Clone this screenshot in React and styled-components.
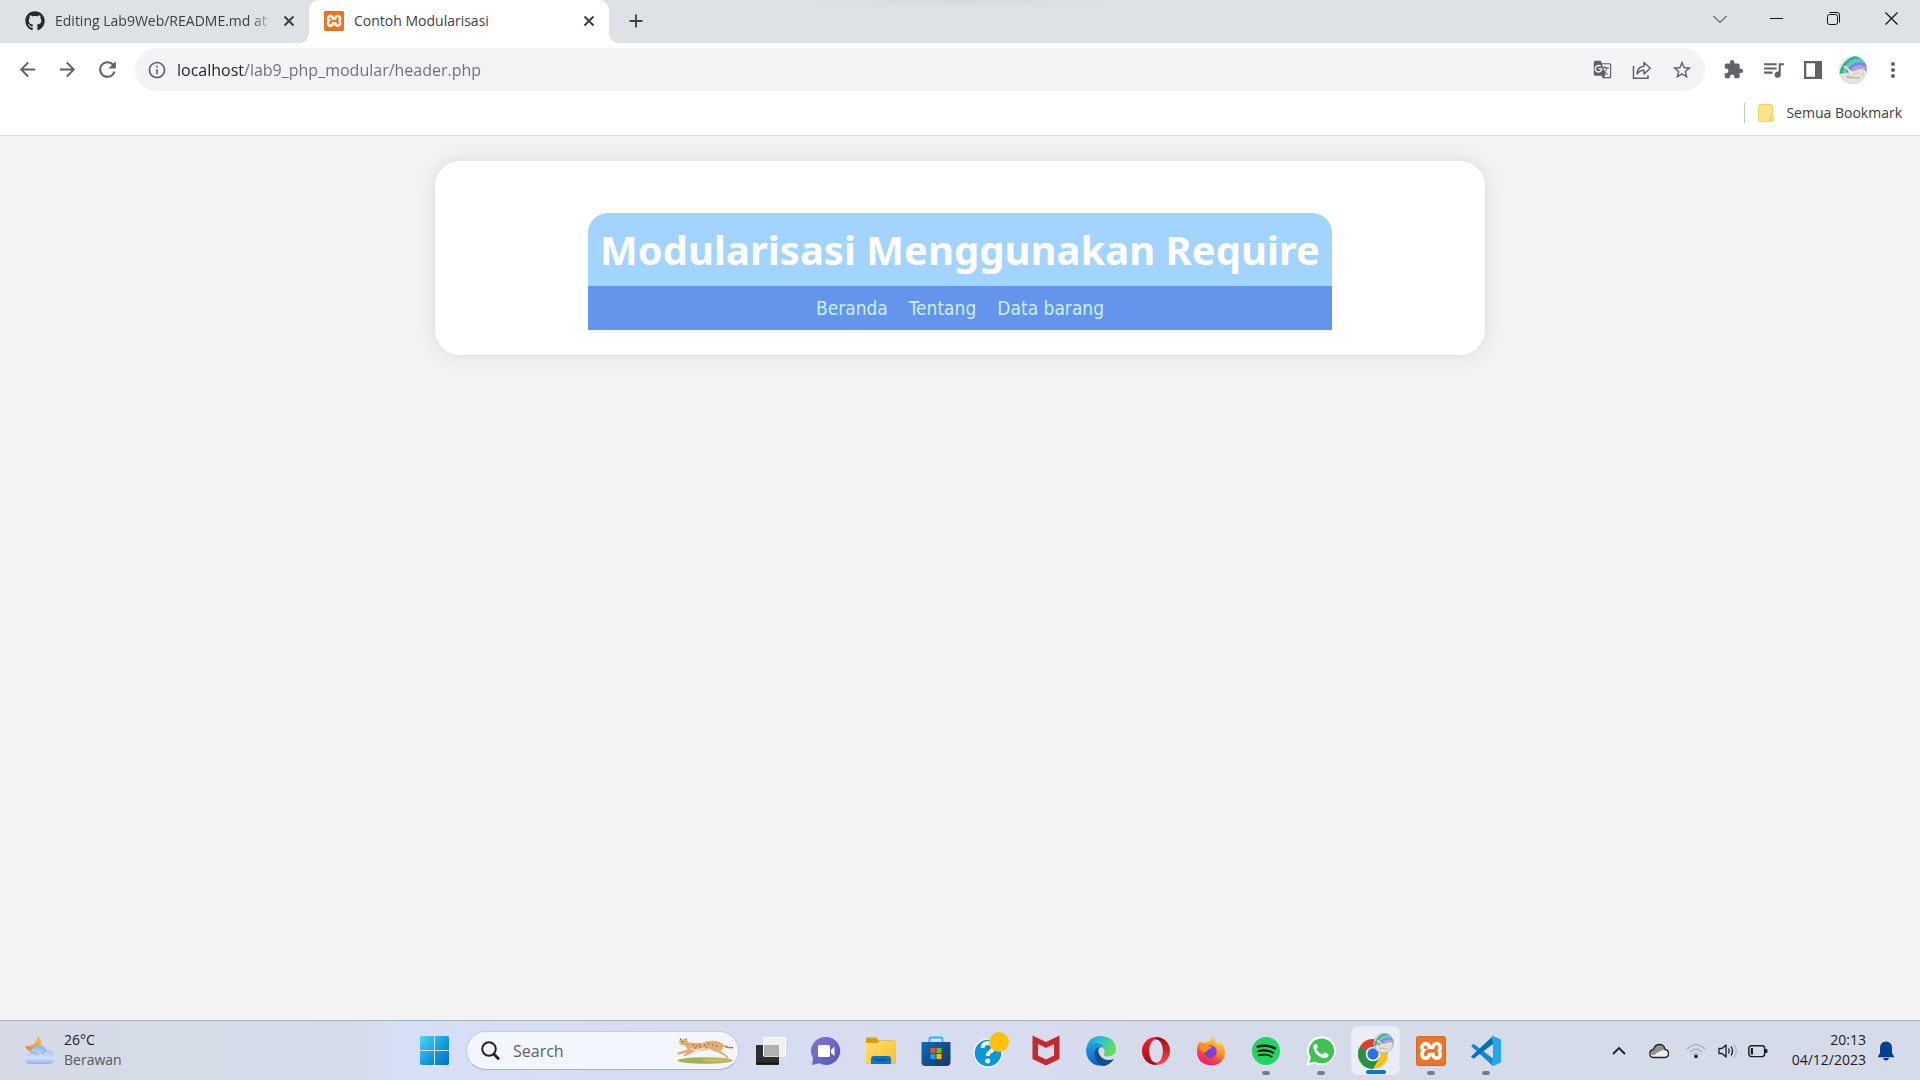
import React from "react";
import styled, { createGlobalStyle, css } from "styled-components";
import {
  MdAdd,
  MdArrowBack,
  MdArrowForward,
  MdExtension,
  MdGTranslate,
  MdInfoOutline,
  MdMoreVert,
  MdQueueMusic,
  MdRefresh,
  MdStarBorder,
} from "react-icons/md";
import { FaGithub } from "react-icons/fa";
import { SiXampp, SiSpotify } from "react-icons/si";

const ui = '"Segoe UI", "Open Sans", "Noto Sans", sans-serif';

const GlobalStyle = createGlobalStyle`
  * { box-sizing: border-box; }
  body { margin: 0; font-family: ${ui}; }
  button, input { font: inherit; }
  svg { display: block; flex: none; }
`;

const Screen = styled.div`
  display: flex;
  flex-direction: column;
  height: 100vh;
  overflow: hidden;
`;

const IconButton = styled.button`
  display: flex;
  align-items: center;
  justify-content: center;
  flex: none;
  width: ${(p) => p.$width || 40}px;
  height: ${(p) => p.$height || 40}px;
  padding: 0;
  border: 0;
  background: none;
  color: ${(p) => p.$color || "#5f6368"};
`;

/* Tab strip */

const TabStrip = styled.header`
  display: flex;
  align-items: stretch;
  height: 43px;
  background: radial-gradient(ellipse 180px 8px at 50% 0, #d6d9de, #dee1e6);
`;

const Tab = styled.div`
  position: relative;
  display: flex;
  align-items: center;
  width: ${(p) => (p.$active ? 300 : 309)}px;
  padding: 0 5px 2px ${(p) => (p.$active ? 15 : 25)}px;
  color: #3c4043;
  font-size: 14px;
  ${(p) =>
    p.$active &&
    css`
      background: #fff;
      border-radius: 10px 10px 0 0;
      &::before,
      &::after {
        content: "";
        position: absolute;
        bottom: 0;
        width: 10px;
        height: 10px;
      }
      &::before {
        left: -10px;
        background: radial-gradient(circle at 0 0, transparent 10px, #fff 10px);
      }
      &::after {
        right: -10px;
        background: radial-gradient(circle at 100% 0, transparent 10px, #fff 10px);
      }
    `}
`;

const TabTitle = styled.span`
  flex: 1;
  min-width: 0;
  margin-left: 10px;
  white-space: nowrap;
  line-height: 20px;
  ${(p) => p.$fade && "mask-image: linear-gradient(to right, #000 194px, transparent 220px);"}
`;

const TabClose = styled(IconButton).attrs({ $width: 30, $height: 30, $color: "#3c4043" })``;

const WindowControls = styled.div`
  display: flex;
  margin-left: auto;
`;

/* Toolbar */

const Toolbar = styled.div`
  display: flex;
  align-items: center;
  height: 52px;
  padding: 1px 7px 0 7px;
  background: #fff;
`;

const AddressBar = styled.div`
  display: flex;
  align-items: center;
  flex: 1;
  height: 43px;
  margin: 0 8px;
  padding: 0 3px 0 12px;
  border-radius: 22px;
  background: #f1f3f4;
  color: #5f6368;
`;

const AddressInput = styled.input`
  flex: 1;
  min-width: 0;
  height: 30px;
  margin-left: 10px;
  padding: 0;
  border: 0;
  outline: 0;
  font-size: 16px;
  color: #5f6368;
  -webkit-text-fill-color: transparent;
  background: linear-gradient(to right, #202124 67px, #6a6e73 67px);
  -webkit-background-clip: text;
  background-clip: text;
`;

const Bookmarks = styled.nav`
  display: flex;
  align-items: center;
  justify-content: flex-end;
  height: 41px;
  padding: 0 18px 4px 0;
  border-bottom: 1px solid #dadce0;
  background: #fff;
`;

const BookmarkButton = styled.button`
  display: flex;
  align-items: center;
  gap: 12px;
  height: 20px;
  padding: 0 0 0 13px;
  border: 0;
  border-left: 1px solid #c6c9cd;
  background: none;
  color: #3c4043;
  font-size: 14px;
  line-height: 20px;
`;

/* Page */

const Viewport = styled.main`
  flex: 1;
  min-height: 0;
  overflow: auto;
  padding: 25px;
  background: #f3f3f3;
`;

const Card = styled.section`
  display: flex;
  justify-content: center;
  max-width: 1050px;
  margin: 0 auto;
  padding: 52px 25px 25px;
  border-radius: 25px;
  background: #fff;
  box-shadow: 0 0 20px rgba(0, 0, 0, 0.1);
`;

const SiteHeader = styled.div`
  min-width: 744px;
`;

const SiteTitle = styled.h1`
  margin: 0;
  padding: 13px 11px;
  border-radius: 20px 20px 0 0;
  background: #a3d3ff;
  color: #fff;
  font-family: Tahoma, "Noto Sans", sans-serif;
  font-size: 40px;
  line-height: 47px;
  text-align: center;
  white-space: nowrap;
`;

const SiteNav = styled.nav`
  display: flex;
  justify-content: center;
  gap: 21px;
  padding: 10px;
  background: #6495ed;
`;

const SiteLink = styled.a`
  color: #c9efe3;
  font-family: Tahoma, "DejaVu Sans Condensed", "DejaVu Sans", sans-serif;
  font-size: 19px;
  line-height: 24px;
  text-decoration: none;
`;

/* Taskbar */

const Taskbar = styled.footer`
  display: flex;
  align-items: center;
  height: 60px;
  border-top: 1px solid #abafbd;
  background: linear-gradient(
    to right,
    #d5dae6 0,
    #d5dbe8 18%,
    #d6dff6 21%,
    #d8dcf2 34%,
    #d8dcf0 50%,
    #d6dbeb 62%,
    #d5dbe9 70%,
    #d5dbe8 100%
  );
`;

const Weather = styled.button`
  display: flex;
  align-items: center;
  flex: 1 0 25px;
  gap: 9px;
  padding: 0 0 2px 25px;
  border: 0;
  background: none;
  text-align: left;
`;

const TwoLines = styled.span`
  display: flex;
  flex-direction: column;
  color: #1b1c1f;
  font-size: 14px;
  line-height: 20px;
  text-align: ${(p) => p.$align || "left"};
`;

const Muted = styled.span`
  color: #54585f;
`;

const Apps = styled.div`
  display: flex;
  align-items: center;
  flex: none;
  height: 100%;
`;

const SearchBox = styled.label`
  display: flex;
  align-items: center;
  gap: 13px;
  width: 273px;
  height: 39px;
  margin: 0 4px;
  padding: 0 4px 0 14px;
  border: 1px solid #c5cbe0;
  border-bottom-color: #a9aec0;
  border-radius: 20px;
  background: #f3f6fd;
`;

const SearchInput = styled.input`
  flex: 1;
  min-width: 0;
  height: 28px;
  padding: 0;
  border: 0;
  outline: 0;
  background: none;
  font-size: 16px;
  &::placeholder {
    color: #5d6066;
    opacity: 1;
  }
`;

const AppButton = styled.button`
  position: relative;
  display: flex;
  align-items: center;
  justify-content: center;
  flex: none;
  width: ${(p) => (p.$active ? 49 : 55)}px;
  height: 49px;
  margin: 0 ${(p) => (p.$active ? 3 : 0)}px;
  padding: 0;
  border: ${(p) => (p.$active ? "1px solid #e4e8f2" : "0")};
  border-radius: 6px;
  background: ${(p) => (p.$active ? "#eaedf6" : "none")};
  &::after {
    content: "";
    display: ${(p) => (p.$running || p.$active ? "block" : "none")};
    position: absolute;
    bottom: 0;
    left: 50%;
    width: ${(p) => (p.$active ? 20 : 8)}px;
    height: 4px;
    border-radius: 2px;
    background: ${(p) => (p.$active ? "#0078d4" : "#7b7e87")};
    transform: translateX(-50%);
  }
`;

const Tray = styled.div`
  display: flex;
  align-items: center;
  justify-content: flex-end;
  flex: 1 0 25px;
  height: 100%;
  padding-right: 20px;
`;

const Clock = styled.button`
  margin: 0 6px 0 19px;
  padding: 0 0 2px;
  border: 0;
  background: none;
`;

/* Drawings */

const Line = ({ size, d, w = 1 }) => (
  <svg width={size} height={size} viewBox={`0 0 ${size} ${size}`} fill="none" stroke="currentColor" strokeWidth={w}>
    <path d={d} />
  </svg>
);

const XamppIcon = ({ size }) => (
  <svg width={size} height={size} viewBox="0 0 30 30">
    <rect x="1" y="1" width="28" height="28" rx="3" fill="#fff" />
    <SiXampp x="0" y="0" size={30} color="#f07423" />
    <rect x=".5" y=".5" width="29" height="29" rx="2.500" fill="none" stroke="#d06a22" />
  </svg>
);

const ShareIcon = () => (
  <svg width="20" height="20" viewBox="0 0 20 20" fill="none" stroke="currentColor" strokeWidth="1.500">
    <path d="M1.500 6v12.200h14.500v-3" />
    <path d="M5 14c.3-5 3-7.500 7-7.700V2.500l6.300 5.800L12 14v-3.700c-3 0-5 1-7 3.700z" strokeLinejoin="round" />
  </svg>
);

const PanelIcon = () => (
  <svg width="18" height="18" viewBox="0 0 18 18">
    <path d="M0 0h18v18H0zM2.300 2.300v13.400H11V2.300z" fill="currentColor" fillRule="evenodd" />
  </svg>
);

const Rainbow = ({ id }) => (
  <>
    <clipPath id={id}>
      <circle cx="14" cy="14" r="14" />
    </clipPath>
    <g clipPath={`url(#${id})`}>
      <rect width="28" height="28" fill="#e7e8ea" />
      <g fill="none" strokeWidth="3.400">
        <circle cx="21" cy="20" r="19" stroke="#36b48a" />
        <circle cx="21" cy="20" r="15.600" stroke="#5cc9c4" />
        <circle cx="21" cy="20" r="12.300" stroke="#6f8ee0" />
        <circle cx="21" cy="20" r="9" stroke="#b79ae6" />
      </g>
      <path d="M0 18q14-3 28-1v11H0z" fill="#e4e4e3" />
      <path
        d="M4 10l3.500 0 3 3.500 2 1.500 6-.5 4-1 2-2 .5 1-1.500 3 1.500 4-1.500.5-2.500-3.500-6 1-3 2.500-4 1 2-3.500-1.500-4-3-1.500z"
        fill="#f3ead9"
        stroke="#b5a68c"
        strokeWidth=".500"
      />
      <path d="M8 21.500l13 .5" stroke="#a9a39c" strokeWidth="1" />
    </g>
  </>
);

const Avatar = () => (
  <svg width="28" height="28" viewBox="0 0 28 28">
    <Rainbow id="profile" />
  </svg>
);

const FolderMark = () => (
  <svg width="16" height="18" viewBox="0 0 16 18">
    <path d="M2 .5h11q1.500 0 1.500 1.500v10q1 .3 1 1.500v2.500q0 1.500-1.500 1.500H2Q.5 17.500.5 16V2Q.5.500 2 .5z" fill="#ffe48f" stroke="#f5d25c" />
    <path d="M12.500 17v-3q0-2 2-2" fill="none" stroke="#eec33d" />
  </svg>
);

const WeatherIcon = () => (
  <svg width="30" height="30" viewBox="0 0 30 30">
    <defs>
      <linearGradient id="moon" x1="1" y1="0" x2="0" y2="1">
        <stop offset="0" stopColor="#f9c544" />
        <stop offset="1" stopColor="#ef7f1c" />
      </linearGradient>
      <linearGradient id="cloud" x1="0" y1="0" x2="0" y2="1">
        <stop offset="0" stopColor="#8fb3ee" />
        <stop offset=".7" stopColor="#cfe1fb" />
        <stop offset="1" stopColor="#8aaeea" />
      </linearGradient>
    </defs>
    <path d="M12 0q5 4 4 10t-9 7q-5-1-7-6 5 1 9-2t3-9z" fill="url(#moon)" />
    <path d="M6 29Q0 29 0 23.500 0 18 5.500 17.500 7 10 14 10q5.500 0 7.500 5Q30 15 30 22q0 7-7 7z" fill="url(#cloud)" />
    <path d="M5.500 17.500q4-1 7 2M17 19q1-3 4.500-4" fill="none" stroke="#7fa3e2" />
  </svg>
);

const StartIcon = () => (
  <svg width="29" height="29" viewBox="0 0 29 29">
    <defs>
      <linearGradient id="win" gradientUnits="userSpaceOnUse" x1="0" y1="0" x2="29" y2="29">
        <stop offset="0" stopColor="#4fd3fb" />
        <stop offset=".55" stopColor="#149add" />
        <stop offset="1" stopColor="#0070cc" />
      </linearGradient>
    </defs>
    <path d="M1 0h13v14H0V1zM15 0h13l1 1v13H15zM0 15h14v14H1l-1-1zM15 15h14v13l-1 1H15z" fill="url(#win)" />
  </svg>
);

const SearchIcon = () => (
  <svg width="19" height="20" viewBox="0 0 19 20" fill="none" stroke="#222" strokeWidth="2">
    <circle cx="8" cy="8" r="6.800" />
    <path d="M12.800 13l5.200 5.200" strokeWidth="2.800" />
  </svg>
);

const Cheetah = () => (
  <svg width="58" height="28" viewBox="0 0 58 28">
    <ellipse cx="29" cy="23.500" rx="27.500" ry="3.200" fill="#a2b356" />
    <ellipse cx="40" cy="23" rx="14" ry="2" fill="#c6bb5c" />
    <path
      d="M4 1.500l1.500.8h3.500l1.500-.8.500 2 1.500 2q8 .5 14 .5 6-3 13-2 5 .5 8 3.500 4 2.500 9 2.500v1.500q-6 0-9-2-.5 3-3 4.500l7 5 1.500 4-1.500-.5-2-3-8-4.500q-5-.5-8-3.500-7 3.500-13 1.500-4 3-11 6l-3-.5 5-3.500-8 2.500-2.500-.5 1-1.500 9.500-3-2-4-4-.5-2.500-2z"
      fill="#e3ad6d"
    />
    <path d="M14 11q8 2 13-.5 7 2 13 4-5-.5-9-3-8 3-15 1.500z" fill="#f6dcb4" />
    <path
      d="M17 8h1M20 9h1M23 8h1M19 11h1M24 10h1M28 8h1M32 7h1M30 10h1M36 8h1M40 9h1M6 4.500h1M4 2h1M9.500 2h1M50 9.800h1.500M53 10.500h1M55.500 10.700h1.500"
      stroke="#5b432e"
      strokeWidth="1.200"
    />
  </svg>
);

const TaskViewIcon = () => (
  <svg width="30" height="28" viewBox="0 0 30 28">
    <rect x="0" y="8" width="23" height="20" rx="1" fill="#2d2d2d" />
    <path d="M0 26.500h23" stroke="#111" strokeWidth="1.500" />
    <rect x="7.500" y=".5" width="22" height="19" rx="1" fill="#f0f0f0" stroke="#fff" />
    <path d="M8 8h15v11.500H8z" fill="#b1b1b1" />
  </svg>
);

const ChatIcon = () => (
  <svg width="30" height="30" viewBox="0 0 30 30">
    <defs>
      <linearGradient id="chat" x1="0" y1="0" x2="1" y2="1">
        <stop offset="0" stopColor="#9a6f9e" />
        <stop offset=".2" stopColor="#7a72cc" />
        <stop offset="1" stopColor="#5355b8" />
      </linearGradient>
    </defs>
    <path d="M15 1a14 14 0 1 1-6.500 26.300L1 29l1-7A14 14 0 0 1 15 1z" fill="url(#chat)" />
    <rect x="7" y="9" width="12" height="12" rx="1.500" fill="#fff" />
    <path d="M20 14l3.500-3.500V20L20 17z" fill="#fff" />
  </svg>
);

const ExplorerIcon = () => (
  <svg width="30" height="27" viewBox="0 0 30 27">
    <defs>
      <linearGradient id="folder" x1="0" y1="0" x2="1" y2="1">
        <stop offset="0" stopColor="#ffdf6d" />
        <stop offset="1" stopColor="#fcbf25" />
      </linearGradient>
    </defs>
    <path d="M0 2Q0 .5 1.500.500H10l3 3h15.500Q30 3.500 30 5v4H0z" fill="#dd9d06" />
    <path d="M0 6h11l3-2h16v23H0z" fill="url(#folder)" />
    <path d="M5 27v-5q0-3 3-3h14q3 0 3 3v5z" fill="#0c72c7" />
    <path d="M9 23h12" stroke="#07488f" strokeWidth="1.300" />
  </svg>
);

const StoreIcon = () => (
  <svg width="30" height="30" viewBox="0 0 30 30">
    <defs>
      <linearGradient id="store" x1="0" y1="0" x2="1" y2="1">
        <stop offset="0" stopColor="#0a6cc0" />
        <stop offset="1" stopColor="#1e345d" />
      </linearGradient>
    </defs>
    <path d="M8.500 7V3q0-1.500 1.500-1.500h10q1.500 0 1.500 1.500v4" fill="none" stroke="#29b6f0" strokeWidth="1.800" />
    <path d="M.5 6h29v20q0 4-4 4h-21q-4 0-4-4z" fill="url(#store)" />
    <path d="M9.500 12h5v5h-5z" fill="#f25022" />
    <path d="M15.500 12h5v5h-5z" fill="#7fba00" />
    <path d="M9.500 18h5v5h-5z" fill="#0fa8ee" />
    <path d="M15.500 18h5v5h-5z" fill="#ffb900" />
  </svg>
);

const HelpIcon = () => (
  <svg width="36" height="38" viewBox="0 0 36 38">
    <circle cx="15" cy="21" r="14" fill="#0a96d8" stroke="#e9f4fb" strokeWidth="1.500" />
    <path d="M9.500 16q.5-5 5.500-5t5 4.500q0 3-3 4.500-2.300 1.500-2.300 4" fill="none" stroke="#fff" strokeWidth="3.800" />
    <circle cx="14.700" cy="29" r="2.500" fill="#fff" />
    <circle cx="26" cy="10" r="10" fill="#fec010" />
  </svg>
);

const McAfeeIcon = () => (
  <svg width="28" height="31" viewBox="0 0 28 31">
    <path d="M.5.500L14 7 27.500.500v23.500L14 30.500.5 24zM6 9v11.500l8 4 8-4V9l-8 4z" fill="#c4292e" fillRule="evenodd" />
  </svg>
);

const EdgeIcon = () => (
  <svg width="30" height="30" viewBox="0 0 30 30">
    <defs>
      <linearGradient id="edgeTop" x1="0" y1="0" x2="1" y2=".4">
        <stop offset="0" stopColor="#1c96dd" />
        <stop offset=".5" stopColor="#2fc2d2" />
        <stop offset="1" stopColor="#62dd55" />
      </linearGradient>
      <linearGradient id="edgeLow" x1="0" y1="0" x2="0" y2="1">
        <stop offset="0" stopColor="#1aa0e6" />
        <stop offset="1" stopColor="#0a63c0" />
      </linearGradient>
    </defs>
    <path d="M0 14Q2 0 15 0q14 1 15 13 0 7-8 7.500-5 0-4-2.500 2-3-1-6-3-3-8-2Q3 11 0 14z" fill="url(#edgeTop)" />
    <path d="M0 14Q2 7 9 7q6 0 8 4-5 0-6.500 5-1 7 7.500 13.500Q10 31 4.500 25.500 0 21 0 14z" fill="url(#edgeLow)" />
    <path d="M8.500 16q1-4 5-5-2 3-.5 7 3 6 10 6 3 0 5-1.500-3 6-10 7.500Q8 28 8.500 16z" fill="#124c91" />
  </svg>
);

const OperaIcon = () => (
  <svg width="30" height="30" viewBox="0 0 30 30">
    <defs>
      <linearGradient id="opera" x1="0" y1="0" x2="0" y2="1">
        <stop offset="0" stopColor="#fb1e33" />
        <stop offset="1" stopColor="#a8060f" />
      </linearGradient>
      <linearGradient id="operaR" x1="0" y1="0" x2="0" y2="1">
        <stop offset="0" stopColor="#a00610" />
        <stop offset="1" stopColor="#f94c4c" />
      </linearGradient>
    </defs>
    <path d="M15 1a14 14 0 0 0 0 28Z" fill="url(#opera)" />
    <path d="M15 1a14 14 0 0 1 0 28Z" fill="url(#operaR)" />
    <ellipse cx="15" cy="15" rx="7" ry="11.500" fill="#d8dcf0" />
  </svg>
);

const FirefoxIcon = () => (
  <svg width="30" height="30" viewBox="0 0 30 30">
    <defs>
      <linearGradient id="fx" x1=".8" y1="0" x2=".3" y2="1">
        <stop offset="0" stopColor="#ffe43c" />
        <stop offset=".45" stopColor="#ff9420" />
        <stop offset=".75" stopColor="#fb3a48" />
        <stop offset="1" stopColor="#e21c84" />
      </linearGradient>
      <linearGradient id="fxIn" x1="1" y1="0" x2="0" y2="1">
        <stop offset="0" stopColor="#a23af0" />
        <stop offset="1" stopColor="#4d4bc4" />
      </linearGradient>
    </defs>
    <path d="M4 5q1 2 3 2 2-1 5-1 3-1 5-6 1 4 4 7 2 1 3 3 0-3-1-5 6 5 6 12-1 12-14 12.500Q1 28 1 15q0-6 3-10z" fill="url(#fx)" />
    <circle cx="14.500" cy="15.500" r="6.300" fill="url(#fxIn)" />
    <path d="M3 9q5-2 8 1l5 .5q0 2-4 3-1 3-4 3-4-2-5-7.500z" fill="#ff8f1e" />
    <path d="M15 7q7 1 7 8 1-6-3-9z" fill="#ffc22d" />
  </svg>
);

const SpotifyIcon = () => (
  <svg width="28" height="28" viewBox="0 0 28 28">
    <circle cx="14" cy="14" r="13" fill="#101010" />
    <SiSpotify x="0" y="0" size={28} color="#1ed760" />
  </svg>
);

const WhatsAppIcon = () => (
  <svg width="30" height="30" viewBox="0 0 30 30">
    <path d="M15.500.300a14.500 14.500 0 1 1-6.800 27.300L.4 29.700l2.200-8A14.500 14.500 0 0 1 15.500.300z" fill="#fff" />
    <path d="M15.500 2.500a12.400 12.400 0 1 1-6.300 23l-5.800 1.500 1.500-5.700A12.400 12.400 0 0 1 15.500 2.500z" fill="#3cc350" />
    <path d="M11 8.500q-.6-1-1.600-.7-2.400 1-2 4 1 6.500 8.600 10 5 1.500 6.500-2 .4-1.500-.7-2l-2.800-1.300q-.7-.2-1.200.4l-1 1.300q-.5.400-1.200.1-3.300-1.500-5-4.500-.3-.6.100-1.100l.9-1.100q.3-.5.100-1z" fill="#fff" />
  </svg>
);

const ChromeIcon = () => (
  <svg width="36" height="36" viewBox="0 0 36 36">
    <g transform="translate(0 6)">
      <circle cx="15" cy="15" r="15" fill="#fbc116" />
      <path d="M15 15L2 7.500A15 15 0 0 1 28 7.500H15z" fill="#e33b2e" />
      <path d="M2 7.500A15 15 0 0 0 15 30l6.500-11.300L15 15z" fill="#229342" />
      <circle cx="15" cy="15" r="7.300" fill="#fff" />
      <circle cx="15" cy="15" r="5.700" fill="#2474e5" />
    </g>
    <g transform="translate(15.500 0) scale(.73)">
      <Rainbow id="chromeProfile" />
      <circle cx="14" cy="14" r="13.300" fill="none" stroke="#a9adb5" strokeWidth="1.200" />
    </g>
  </svg>
);

const CodeIcon = () => (
  <svg width="30" height="30" viewBox="0 0 30 30">
    <path d="M0 10l2.500-2.200L22 22.500V30z" fill="#0d8ad0" />
    <path d="M0 20.500l2.500 2.300L22 8V0z" fill="#0470b8" />
    <path d="M22 0l8 3.500v23L22 30q-1 0-1.500-.7L22 22V8L20.500.700Q21 0 22 0z" fill="#27a4ec" />
  </svg>
);

const CloudIcon = () => (
  <svg width="20" height="16" viewBox="0 0 20 16">
    <path d="M5 14.500q-4.200 0-4.200-4 0-3.500 3.700-4Q6 1.500 10.500 1.500t5.500 5q3.500.5 3.500 4t-3.500 4z" fill="#eee" />
    <path d="M4.500 6.500Q6 2 10.500 2t5 4.500Q10 8 5 12q-3.500.5-3.800-2 .3-3 3.300-3.500z" fill="#909296" />
    <path d="M5 14.500q-4.200 0-4.200-4 0-3.500 3.700-4Q6 1.500 10.500 1.500t5.500 5q3.500.5 3.500 4t-3.500 4z" fill="none" stroke="#222" strokeWidth="1.300" />
  </svg>
);

const WifiIcon = () => (
  <svg width="20" height="16" viewBox="0 0 20 16" fill="none" stroke="#afb4bf" strokeWidth="1.500">
    <path d="M1 6q9-9 18 0M4 9q6-6 12 0M7 12q3-3 6 0" />
    <circle cx="10" cy="13.500" r="1.800" fill="#111" stroke="none" />
  </svg>
);

const VolumeIcon = () => (
  <svg width="20" height="16" viewBox="0 0 20 16" fill="none" stroke="#1c1d20" strokeWidth="1.300">
    <path d="M1 5.500h3L8 2v12l-4-3.500H1z" strokeLinejoin="round" />
    <path d="M10.500 5.500q1.500 2.500 0 5M13 3.500q3 4.500 0 9" />
    <path d="M15.800 1.500q5 6.500 0 13" stroke="#afb4bf" />
  </svg>
);

const BatteryIcon = () => (
  <svg width="20" height="14" viewBox="0 0 20 14">
    <rect x=".8" y="1.800" width="15.800" height="10.800" rx="2.500" fill="none" stroke="#1c1d20" strokeWidth="1.400" />
    <rect x="2.800" y="4" width="2.200" height="6.500" fill="#1c1d20" />
    <path d="M17 5h1.500q1 0 1 1v2q0 1-1 1H17z" fill="#1c1d20" />
  </svg>
);

const BellIcon = () => (
  <svg width="16" height="20" viewBox="0 0 16 20">
    <path d="M8 .5q6 .5 6 6.500v5l2 3.500v.7H0v-.7L2 12V7Q2 1 8 .5z" fill="#003e92" />
    <path d="M5 17h6q-.5 2.500-3 2.500T5 17z" fill="#003e92" />
  </svg>
);

const apps = [
  { name: "Task View", Icon: TaskViewIcon },
  { name: "Chat", Icon: ChatIcon },
  { name: "File Explorer", Icon: ExplorerIcon },
  { name: "Microsoft Store", Icon: StoreIcon },
  { name: "Get Help", Icon: HelpIcon },
  { name: "McAfee", Icon: McAfeeIcon },
  { name: "Edge", Icon: EdgeIcon },
  { name: "Opera", Icon: OperaIcon },
  { name: "Firefox", Icon: FirefoxIcon },
  { name: "Spotify", Icon: SpotifyIcon, running: true },
  { name: "WhatsApp", Icon: WhatsAppIcon, running: true },
  { name: "Chrome", Icon: ChromeIcon, active: true },
  { name: "XAMPP", Icon: () => <XamppIcon size={30} />, running: true },
  { name: "Visual Studio Code", Icon: CodeIcon, running: true },
];

const links = ["Beranda", "Tentang", "Data barang"];

const CloseMark = () => <Line size={12} w={2} d="M1.500 1.500l9 9M10.500 1.500l-9 9" />;

export default function App() {
  return (
    <Screen>
      <GlobalStyle />
      <TabStrip>
        <Tab>
          <FaGithub size={20} color="#24292f" />
          <TabTitle $fade>Editing Lab9Web/README.md at</TabTitle>
          <TabClose aria-label="Close tab">
            <CloseMark />
          </TabClose>
        </Tab>
        <Tab $active>
          <XamppIcon size={20} />
          <TabTitle>Contoh Modularisasi</TabTitle>
          <TabClose aria-label="Close tab">
            <CloseMark />
          </TabClose>
        </Tab>
        <IconButton $width={54} $height={42} $color="#3c4043" aria-label="New tab">
          <MdAdd size={22} />
        </IconButton>
        <WindowControls>
          <IconButton $width={57} $height={37} $color="#111" aria-label="Search tabs">
            <Line size={14} d="M.5 4l6.500 6.500L13.500 4" />
          </IconButton>
          <IconButton $width={57} $height={37} $color="#111" aria-label="Minimize">
            <Line size={13} d="M0 6.500h13" />
          </IconButton>
          <IconButton $width={57} $height={37} $color="#111" aria-label="Restore">
            <Line size={13} d="M2.500.5h7.500q2.500 0 2.500 2.500v7.500M2.500 2.500h6q2 0 2 2v6q0 2-2 2h-6q-2 0-2-2v-6q0-2 2-2z" />
          </IconButton>
          <IconButton $width={58} $height={37} $color="#111" aria-label="Close window">
            <Line size={13} w={1.2} d="M.5.5l12 12M12.500.5l-12 12" />
          </IconButton>
        </WindowControls>
      </TabStrip>

      <Toolbar>
        <IconButton aria-label="Back">
          <MdArrowBack size={23} />
        </IconButton>
        <IconButton aria-label="Forward">
          <MdArrowForward size={23} />
        </IconButton>
        <IconButton aria-label="Reload">
          <MdRefresh size={25} />
        </IconButton>
        <AddressBar>
          <MdInfoOutline size={20} />
          <AddressInput aria-label="Address" defaultValue="localhost/lab9_php_modular/header.php" />
          <IconButton aria-label="Translate">
            <MdGTranslate size={19} />
          </IconButton>
          <IconButton aria-label="Share">
            <ShareIcon />
          </IconButton>
          <IconButton aria-label="Bookmark">
            <MdStarBorder size={22} />
          </IconButton>
        </AddressBar>
        <IconButton aria-label="Extensions">
          <MdExtension size={21} />
        </IconButton>
        <IconButton aria-label="Media">
          <MdQueueMusic size={25} />
        </IconButton>
        <IconButton aria-label="Side panel">
          <PanelIcon />
        </IconButton>
        <IconButton aria-label="Profile">
          <Avatar />
        </IconButton>
        <IconButton aria-label="More">
          <MdMoreVert size={24} />
        </IconButton>
      </Toolbar>

      <Bookmarks>
        <BookmarkButton>
          <FolderMark />
          Semua Bookmark
        </BookmarkButton>
      </Bookmarks>

      <Viewport>
        <Card>
          <SiteHeader>
            <SiteTitle>Modularisasi Menggunakan Require</SiteTitle>
            <SiteNav>
              {links.map((label) => (
                <SiteLink key={label} href="#">
                  {label}
                </SiteLink>
              ))}
            </SiteNav>
          </SiteHeader>
        </Card>
      </Viewport>

      <Taskbar>
        <Weather>
          <WeatherIcon />
          <TwoLines>
            26°C
            <Muted>Berawan</Muted>
          </TwoLines>
        </Weather>
        <Apps>
          <AppButton aria-label="Start">
            <StartIcon />
          </AppButton>
          <SearchBox>
            <SearchIcon />
            <SearchInput placeholder="Search" aria-label="Search" />
            <Cheetah />
          </SearchBox>
          {apps.map(({ name, Icon, running, active }) => (
            <AppButton key={name} aria-label={name} $running={running} $active={active}>
              <Icon />
            </AppButton>
          ))}
        </Apps>
        <Tray>
          <IconButton aria-label="Hidden icons" $color="#1c1d20">
            <Line size={14} w={1.8} d="M1 10l6-6 6 6" />
          </IconButton>
          <IconButton aria-label="OneDrive">
            <CloudIcon />
          </IconButton>
          <IconButton $width={34} aria-label="Network">
            <WifiIcon />
          </IconButton>
          <IconButton $width={30} aria-label="Volume">
            <VolumeIcon />
          </IconButton>
          <IconButton $width={30} aria-label="Battery">
            <BatteryIcon />
          </IconButton>
          <Clock>
            <TwoLines $align="right">
              <span>20:13</span>
              <span>04/12/2023</span>
            </TwoLines>
          </Clock>
          <IconButton $width={28} aria-label="Notifications">
            <BellIcon />
          </IconButton>
        </Tray>
      </Taskbar>
    </Screen>
  );
}
